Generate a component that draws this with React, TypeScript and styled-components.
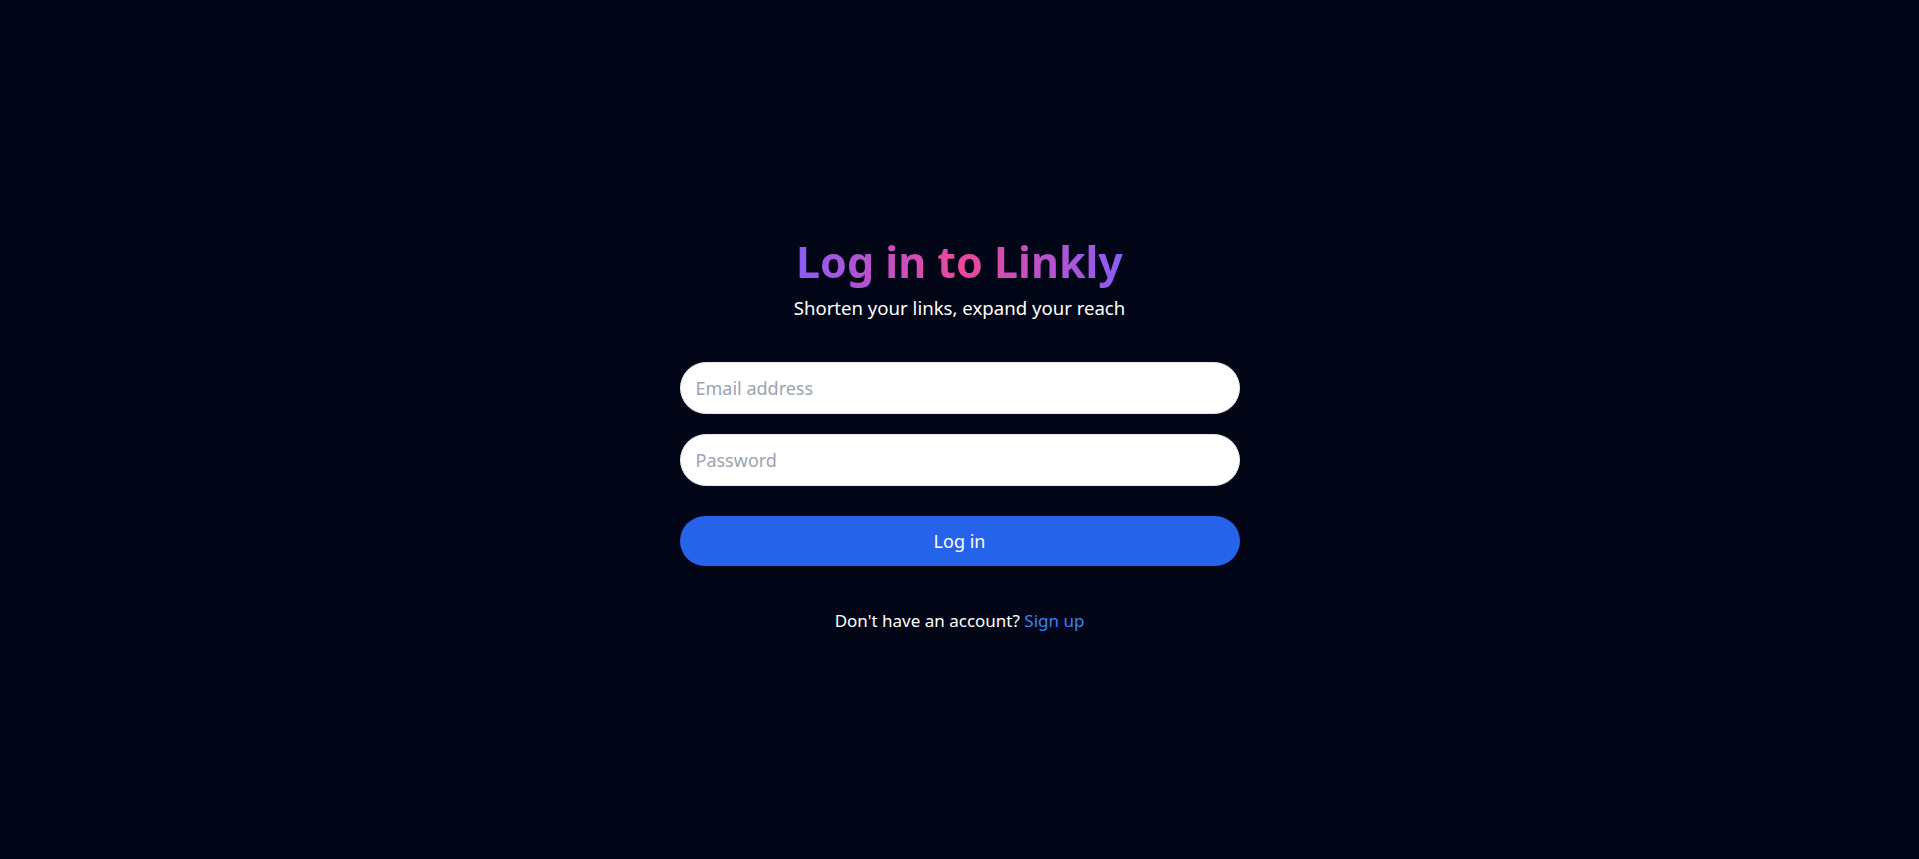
import React from "react";
import styled, { createGlobalStyle } from "styled-components";

const Global = createGlobalStyle`
  html, body { margin: 0; padding: 0; background: #020617; }
  body { font-family: "Noto Sans", "Open Sans", sans-serif; }
  * { box-sizing: border-box; }
`;

const Page = styled.main`
  min-height: 100vh;
  background: #020617;
  display: flex;
  align-items: center;
  justify-content: center;
  padding-top: 10px;
`;

const Card = styled.div`
  width: 560px;
  display: flex;
  flex-direction: column;
  align-items: center;
`;

const Title = styled.h1`
  margin: 0;
  font-size: 43px;
  line-height: 52px;
  font-weight: 700;
  background: linear-gradient(90deg, #8b5cf6 0%, #ec4899 50%, #8b5cf6 100%);
  -webkit-background-clip: text;
  background-clip: text;
  color: transparent;
`;

const Subtitle = styled.p`
  margin: 7px 0 0;
  font-size: 18.6px;
  line-height: 26px;
  color: #ffffff;
`;

const Form = styled.form`
  width: 100%;
  margin-top: 41px;
  display: flex;
  flex-direction: column;
`;

const Field = styled.input<{ $gap?: number }>`
  width: 100%;
  height: 52px;
  border: 1px solid #e5e7eb;
  border-radius: 26px;
  background: #ffffff;
  padding: 0 15px;
  font-family: inherit;
  font-size: 18px;
  color: #111827;
  outline: none;
  margin-bottom: ${(p) => p.$gap ?? 20}px;
  &::placeholder { color: #9ca3af; }
`;

const Button = styled.button`
  width: 100%;
  height: 50px;
  border: none;
  border-radius: 25px;
  background: #2563eb;
  color: #ffffff;
  font-family: inherit;
  font-size: 18px;
  cursor: pointer;
`;

const Footer = styled.p`
  margin: 43px 0 0;
  font-size: 17px;
  line-height: 24px;
  color: #ffffff;
`;

const Link = styled.a`
  color: #3b82f6;
  text-decoration: none;
`;

export default function App() {
  return (
    <>
      <Global />
      <Page>
        <Card>
          <Title>Log in to Linkly</Title>
          <Subtitle>Shorten your links, expand your reach</Subtitle>
          <Form onSubmit={(e) => e.preventDefault()}>
            <Field type="email" placeholder="Email address" />
            <Field type="password" placeholder="Password" $gap={30} />
            <Button type="submit">Log in</Button>
          </Form>
          <Footer>
            Don't have an account? <Link href="#">Sign up</Link>
          </Footer>
        </Card>
      </Page>
    </>
  );
}
